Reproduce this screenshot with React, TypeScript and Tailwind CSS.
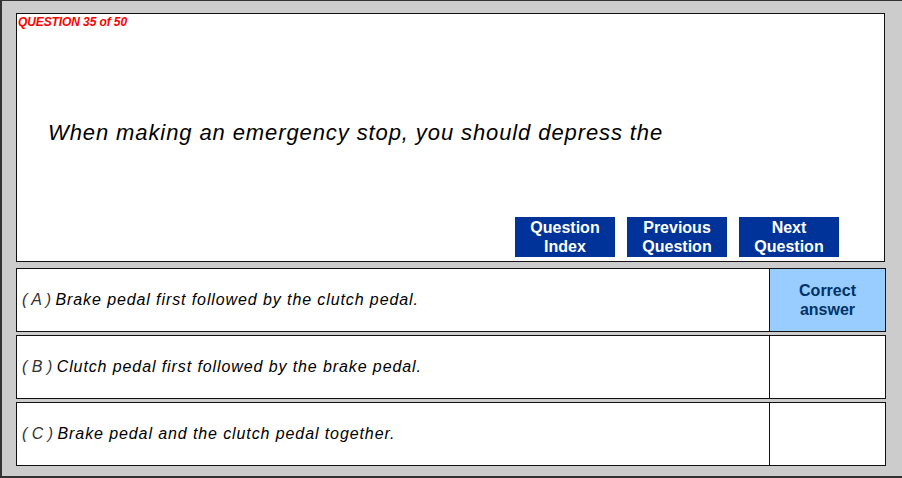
import React from "react";

const answers = [
  { key: "A", text: "Brake pedal first followed by the clutch pedal.", correct: true },
  { key: "B", text: "Clutch pedal first followed by the brake pedal.", correct: false },
  { key: "C", text: "Brake pedal and the clutch pedal together.", correct: false },
];

const navButtons = [
  ["Question", "Index"],
  ["Previous", "Question"],
  ["Next", "Question"],
];

export default function App() {
  return (
    <div
      className="w-[902px] h-[478px] bg-[#cccccc] border-l-2 border-t border-b-2 border-[#333333] pl-[14px] pt-[12px] flex flex-col"
      style={{ fontFamily: '"Liberation Sans", Arial, sans-serif' }}
    >
      {/* question panel */}
      <div className="w-[869px] h-[249px] bg-white border border-[#111111] flex flex-col">
        <div className="pl-[1px] pt-[1px] text-[12px] leading-[14px] font-bold italic text-[#ff0000] tracking-[-0.1px]">
          QUESTION 35 of 50
        </div>
        <div className="mt-[91px] pl-[31px] text-[22px] leading-[26px] italic text-black tracking-[0.9px]">
          When making an emergency stop, you should depress the
        </div>
        <div className="mt-auto flex justify-end gap-[12px] pr-[45px] pb-[4px]">
          {navButtons.map(([a, b]) => (
            <button
              key={a + b}
              className="w-[100px] h-[40px] bg-[#003399] text-white font-bold text-[16px] leading-[19px] flex flex-col items-center justify-center"
            >
              <span>{a}</span>
              <span>{b}</span>
            </button>
          ))}
        </div>
      </div>

      {/* answers */}
      <div className="mt-[6px] flex flex-col gap-[3px]">
        {answers.map((ans) => (
          <div
            key={ans.key}
            className="w-[870px] h-[64px] bg-white border border-[#111111] flex"
          >
            <div className="flex-1 flex items-center pl-[5px] text-[16px] italic text-black whitespace-pre">
              <span className="text-[#333333]">{`( ${ans.key} ) `}</span>
              <span className="tracking-[0.9px]">{ans.text}</span>
            </div>
            <div
              className={`w-[116px] border-l border-[#111111] flex items-center justify-center text-center font-bold text-[16px] leading-[19px] ${
                ans.correct ? "bg-[#99ccff] text-[#003366]" : "bg-white"
              }`}
            >
              {ans.correct && (
                <span>
                  Correct
                  <br />
                  answer
                </span>
              )}
            </div>
          </div>
        ))}
      </div>
    </div>
  );
}
